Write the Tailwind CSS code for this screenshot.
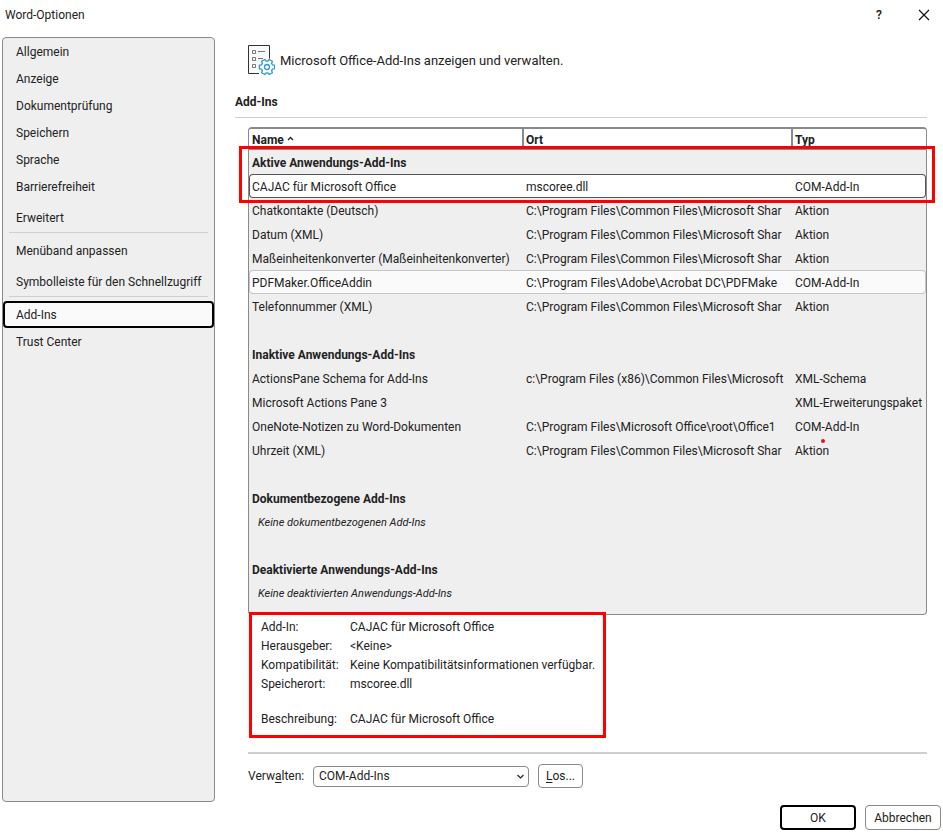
<!DOCTYPE html>
<html lang="de">
<head>
  <meta charset="UTF-8" />
  <meta name="viewport" content="width=device-width, initial-scale=1.0" />
  <title>Word-Optionen</title>
  <script src="https://cdn.jsdelivr.net/npm/@tailwindcss/browser@4"></script>
</head>
<body class="min-h-screen flex flex-col bg-white text-[#222] font-[Roboto,sans-serif] text-[12px] leading-4">

  <!-- Titelleiste -->
  <header class="flex items-center h-[37px] pl-[5px] pr-[9px] pb-2">
    <h1 class="flex-1">Word-Optionen</h1>
    <button type="button" class="w-6 font-semibold" aria-label="Hilfe">?</button>
    <button type="button" class="ml-[23px] p-1" aria-label="Schließen">
      <svg class="w-3 h-3" viewBox="0 0 12 12" fill="none" stroke="#111" stroke-width="1.2"><path d="M1 1l10 10M11 1L1 11" /></svg>
    </button>
  </header>

  <div class="flex flex-1 pl-[2px]">
    <nav class="w-[213px] shrink-0 flex flex-col bg-[#efefef] border border-[#8a8a8a] rounded">
      <a href="#" class="flex items-center h-[27px] px-[13px]">Allgemein</a>
      <a href="#" class="flex items-center h-[27px] px-[13px]">Anzeige</a>
      <a href="#" class="flex items-center h-[27px] px-[13px]">Dokumentprüfung</a>
      <a href="#" class="flex items-center h-[27px] px-[13px]">Speichern</a>
      <a href="#" class="flex items-center h-[27px] px-[13px]">Sprache</a>
      <a href="#" class="flex items-center h-[27px] px-[13px]">Barrierefreiheit</a>
      <a href="#" class="flex items-center h-[27px] px-[13px] mt-1">Erweitert</a>
      <hr class="mt-px mb-1 mx-[6px] border-[#cfcfcf]" />
      <a href="#" class="flex items-center h-[27px] px-[13px]">Menüband anpassen</a>
      <a href="#" class="flex items-center h-[27px] px-[13px] mt-1 whitespace-nowrap">Symbolleiste für den Schnellzugriff</a>
      <hr class="mt-px mb-1 mx-[6px] border-[#cfcfcf]" />
      <a href="#" class="flex items-center h-[27px] px-[11px] bg-[#fafafa] border-2 border-black rounded" aria-current="page">Add-Ins</a>
      <a href="#" class="flex items-center h-[27px] px-[13px]">Trust Center</a>
    </nav>

    <main class="flex-1 min-w-0 pl-5 pr-4">
      <div class="flex items-center gap-[5px] pl-3 pt-[7px]">
        <svg class="w-7 h-8 shrink-0" viewBox="0 0 28 32" fill="none">
          <path d="M12 29.5H1.5V1.5h21v13" fill="#fafafa" stroke="#333" />
          <path d="M5.500 6.500h3v3h-3zM5.500 13.500h3v3h-3zM5.500 20.500h3v3h-3zM11 7.500h7M11 14.500h5" stroke="#777" />
          <g transform="translate(20 23)" stroke="#2b96d8" stroke-width="1.3" stroke-linejoin="round">
            <path fill="#fff" d="M5.400-2.200L7.600-1.800 7.600 1.800 5.400 2.200 4.600 3.600 5.400 5.700 2.200 7.500.8 5.800-.8 5.800-2.200 7.500-5.400 5.700-4.600 3.600-5.400 2.200-7.600 1.800-7.600-1.800-5.400-2.200-4.600-3.600-5.400-5.700-2.200-7.500-.8-5.800.8-5.800 2.200-7.500 5.400-5.700 4.600-3.600z" />
            <circle r="2.500" />
          </g>
        </svg>
        <p class="pt-[2px] text-[13px]">Microsoft Office-Add-Ins anzeigen und verwalten.</p>
      </div>

      <h2 class="mt-[18px] pb-[7px] font-bold border-b border-[#cfcfcf]">Add-Ins</h2>

      <div class="relative mt-[9px] ml-[13px]">
        <div class="min-h-[488px] bg-[#efefef] border border-t-2 border-[#8a8a8a] rounded overflow-hidden">
          <table class="w-full table-fixed border-separate border-spacing-0 text-left whitespace-nowrap">
            <colgroup>
              <col class="w-[273px]" />
              <col class="w-[269px]" />
              <col />
            </colgroup>
            <thead>
              <tr class="h-[21px] bg-white">
                <th class="pl-[3px] pt-[2px] border-b border-[#8a8a8a]">Name<svg class="inline w-[7px] h-[5px] ml-[3px] mb-1" viewBox="0 0 7 5" fill="none" stroke="#222" stroke-width="1.300"><path d="M1 4l2.500-2.500L6 4" /></svg></th>
                <th class="pl-[2px] pt-[2px] border-b border-l-2 border-[#8a8a8a]">Ort</th>
                <th class="pl-[2px] pt-[2px] border-b border-l-2 border-[#8a8a8a]">Typ</th>
              </tr>
            </thead>
            <tbody class="[&_td]:pt-[2px]">
              <tr class="h-6"><th colspan="3" class="pl-[3px] pt-[2px]">Aktive Anwendungs-Add-Ins</th></tr>
              <tr class="h-6 bg-white">
                <td class="pl-[2px] border-y border-l rounded-l border-[#555]">CAJAC für Microsoft Office</td>
                <td class="pl-1 pr-2 border-y border-[#555]">mscoree.dll</td>
                <td class="pl-1 border-y border-r rounded-r border-[#555]">COM-Add-In</td>
              </tr>
              <tr class="h-6">
                <td class="pl-[3px]">Chatkontakte (Deutsch)</td>
                <td class="pl-1 pr-2">C:\Program Files\Common Files\Microsoft Shar</td>
                <td class="pl-1">Aktion</td>
              </tr>
              <tr class="h-6">
                <td class="pl-[3px]">Datum (XML)</td>
                <td class="pl-1 pr-2">C:\Program Files\Common Files\Microsoft Shar</td>
                <td class="pl-1">Aktion</td>
              </tr>
              <tr class="h-6">
                <td class="pl-[3px]">Maßeinheitenkonverter (Maßeinheitenkonverter)</td>
                <td class="pl-1 pr-2">C:\Program Files\Common Files\Microsoft Shar</td>
                <td class="pl-1">Aktion</td>
              </tr>
              <tr class="h-6">
                <td class="pl-[2px] bg-[#fafafa] border-y border-l rounded-l border-[#c6c6c6]">PDFMaker.OfficeAddin</td>
                <td class="pl-1 pr-2 bg-[#fafafa] border-y border-[#c6c6c6]">C:\Program Files\Adobe\Acrobat DC\PDFMake</td>
                <td class="pl-1 bg-[#fafafa] border-y border-r rounded-r border-[#c6c6c6]">COM-Add-In</td>
              </tr>
              <tr class="h-6">
                <td class="pl-[3px]">Telefonnummer (XML)</td>
                <td class="pl-1 pr-2">C:\Program Files\Common Files\Microsoft Shar</td>
                <td class="pl-1">Aktion</td>
              </tr>
            </tbody>
            <tbody class="[&_td]:pt-[2px]">
              <tr class="h-12"><th colspan="3" class="pl-[3px] pb-[3px] align-bottom">Inaktive Anwendungs-Add-Ins</th></tr>
              <tr class="h-6">
                <td class="pl-[3px]">ActionsPane Schema for Add-Ins</td>
                <td class="pl-1 pr-2">c:\Program Files (x86)\Common Files\Microsoft</td>
                <td class="pl-1">XML-Schema</td>
              </tr>
              <tr class="h-6">
                <td class="pl-[3px]">Microsoft Actions Pane 3</td>
                <td></td>
                <td class="pl-1">XML-Erweiterungspaket</td>
              </tr>
              <tr class="h-6">
                <td class="pl-[3px]">OneNote-Notizen zu Word-Dokumenten</td>
                <td class="pl-1 pr-2">C:\Program Files\Microsoft Office\root\Office1</td>
                <td class="pl-1">COM-Add-In</td>
              </tr>
              <tr class="h-6">
                <td class="pl-[3px]">Uhrzeit (XML)</td>
                <td class="pl-1 pr-2">C:\Program Files\Common Files\Microsoft Shar</td>
                <td class="pl-1">Aktion</td>
              </tr>
            </tbody>
            <tbody class="[&_td]:pt-[2px]">
              <tr class="h-12"><th colspan="3" class="pl-[3px] pb-[3px] align-bottom">Dokumentbezogene Add-Ins</th></tr>
              <tr class="h-6"><td colspan="3" class="pl-[9px] text-[11px] italic">Keine dokumentbezogenen Add-Ins</td></tr>
            </tbody>
            <tbody class="[&_td]:pt-[2px]">
              <tr class="h-[47px]"><th colspan="3" class="pl-[3px] pb-[3px] align-bottom">Deaktivierte Anwendungs-Add-Ins</th></tr>
              <tr class="h-6"><td colspan="3" class="pl-[9px] text-[11px] italic">Keine deaktivierten Anwendungs-Add-Ins</td></tr>
            </tbody>
          </table>
        </div>
        <!-- Markierungen -->
        <div class="absolute top-[19px] -left-[9px] -right-2 h-[57px] border-3 border-[#f00]"></div>
        <div class="absolute top-[312px] left-[573px] w-1 h-1 rounded-full bg-[#e81123]"></div>
      </div>

      <dl class="relative -mt-[3px] ml-[14px] w-[357px] h-[126px] grid grid-cols-[89px_1fr] auto-rows-[19px] content-start pl-[9px] pt-1 border-3 border-[#f00] whitespace-nowrap">
        <dt>Add-In:</dt><dd>CAJAC für Microsoft Office</dd>
        <dt>Herausgeber:</dt><dd>&lt;Keine&gt;</dd>
        <dt>Kompatibilität:</dt><dd>Keine Kompatibilitätsinformationen verfügbar.</dd>
        <dt>Speicherort:</dt><dd>mscoree.dll</dd>
        <dt class="pt-4">Beschreibung:</dt><dd class="pt-4">CAJAC für Microsoft Office</dd>
      </dl>

      <form class="flex items-center mt-[14px] ml-[13px] pt-[10px] border-t-2 border-[#cfcfcf]">
        <label for="verwalten" class="w-[65px]">Verw<u class="underline-offset-2">a</u>lten:</label>
        <div class="relative w-[216px]">
          <select id="verwalten" class="block w-full h-[21px] pl-[5px] appearance-none bg-white border border-[#8a8a8a] rounded">
            <option>COM-Add-Ins</option>
          </select>
          <svg class="absolute right-[5px] top-2 w-[7px] h-[5px] pointer-events-none" viewBox="0 0 7 5" fill="none" stroke="#222" stroke-width="1.200"><path d="M.5 1l3 3 3-3" /></svg>
        </div>
        <button type="button" class="ml-[9px] w-[45px] h-6 border border-[#8a8a8a] rounded"><u class="underline-offset-2">L</u>os...</button>
      </form>
    </main>
  </div>

  <footer class="flex justify-end gap-[9px] pt-[3px] pr-[2px] pb-[6px]">
    <button type="button" class="w-[76px] h-[25px] border-2 border-black rounded">OK</button>
    <button type="button" class="w-[76px] h-[25px] border border-[#8a8a8a] rounded">Abbrechen</button>
  </footer>
</body>
</html>
